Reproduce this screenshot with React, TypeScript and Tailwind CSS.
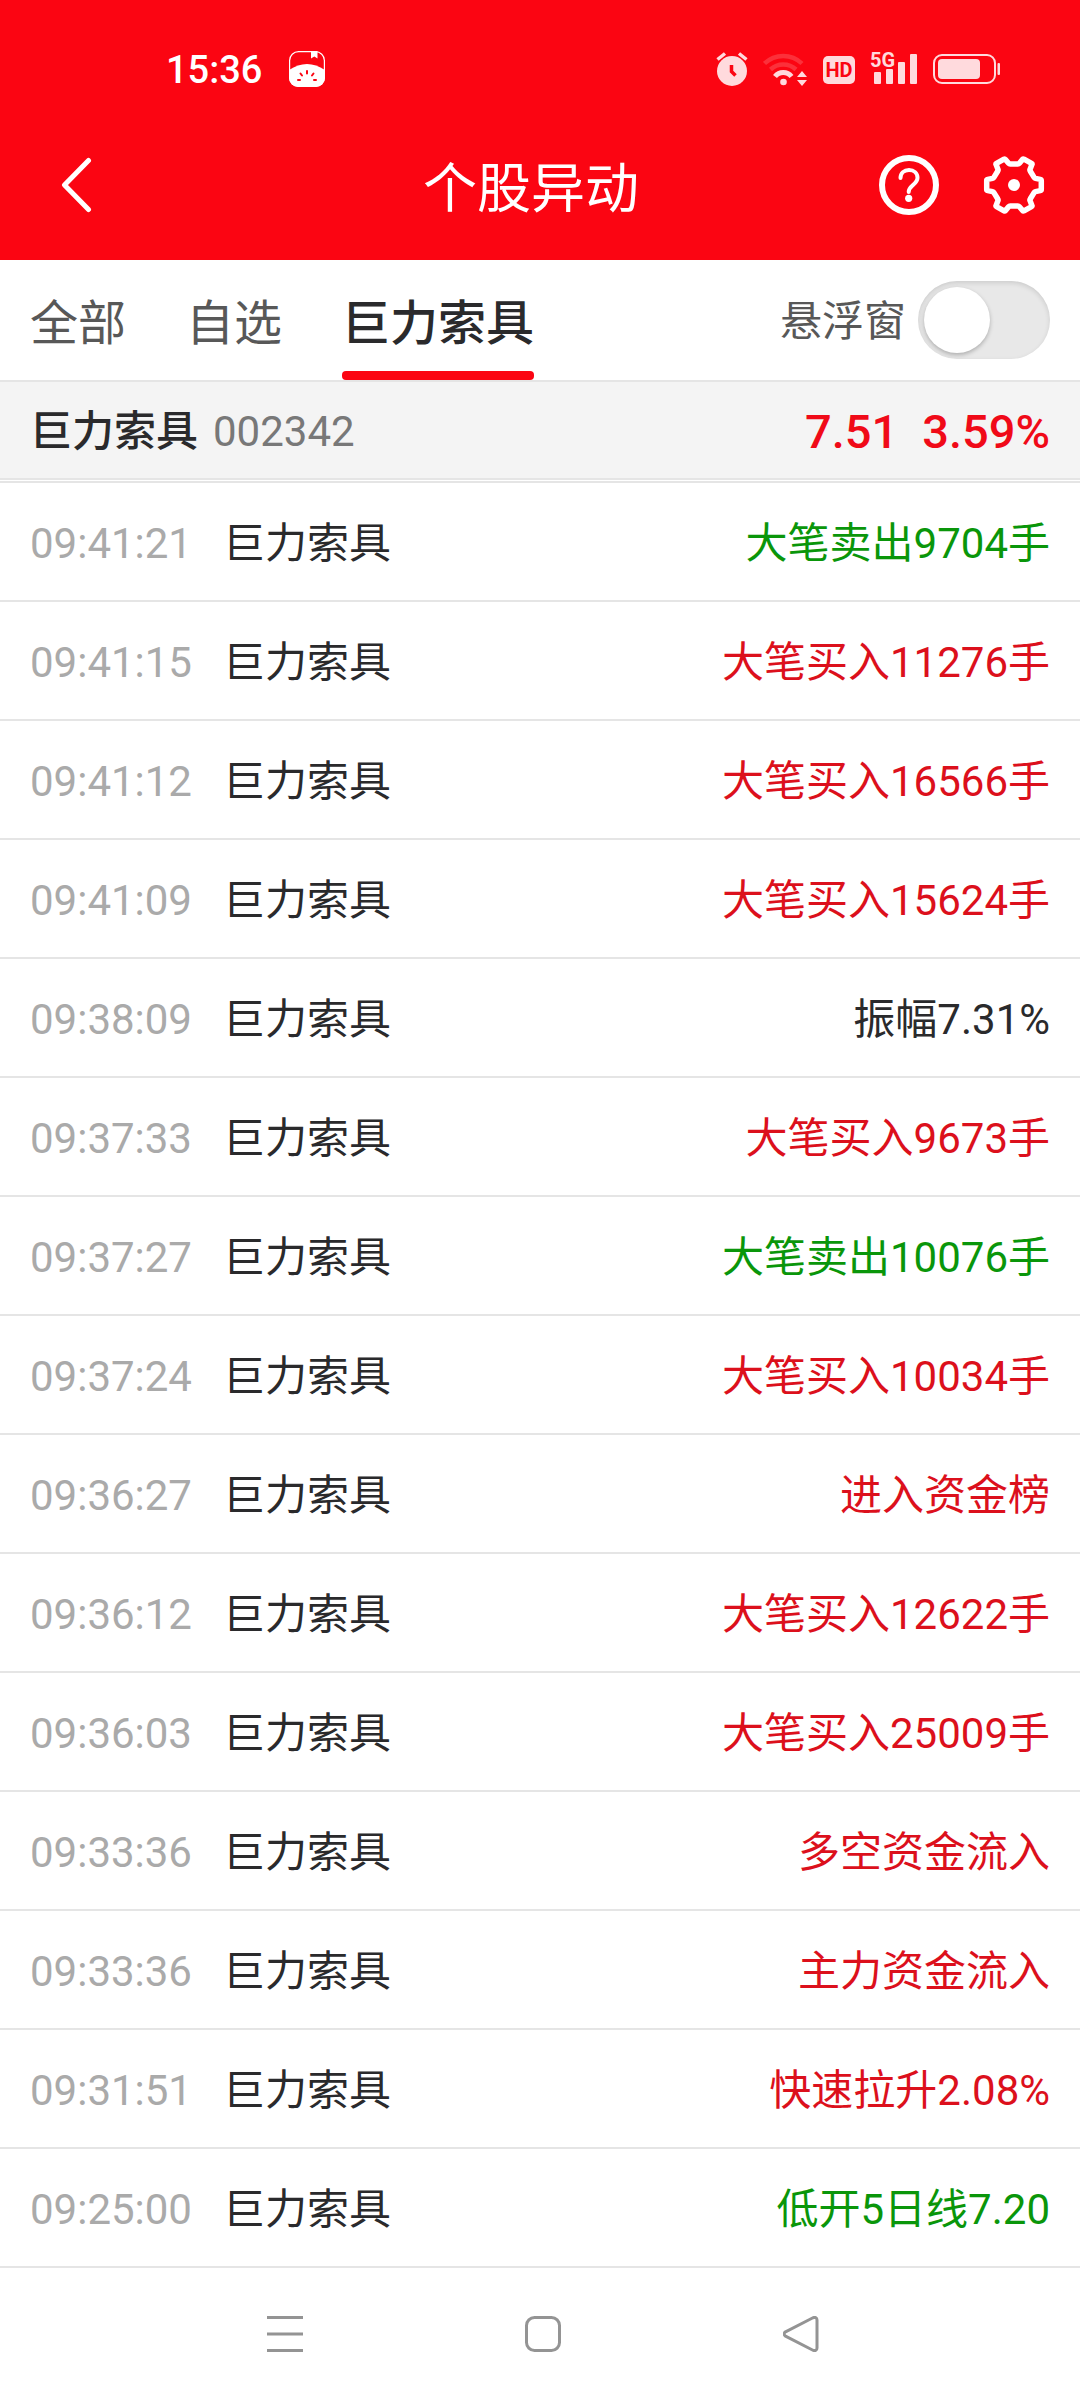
import { useState } from 'react';

type Trend = 'up' | 'down' | 'flat';

interface StockEvent {
    time: string;
    name: string;
    text: string;
    trend: Trend;
}

const STOCK = '巨力索具';

const events: StockEvent[] = [
    { time: '09:41:21', name: STOCK, text: '大笔卖出9704手', trend: 'down' },
    { time: '09:41:15', name: STOCK, text: '大笔买入11276手', trend: 'up' },
    { time: '09:41:12', name: STOCK, text: '大笔买入16566手', trend: 'up' },
    { time: '09:41:09', name: STOCK, text: '大笔买入15624手', trend: 'up' },
    { time: '09:38:09', name: STOCK, text: '振幅7.31%', trend: 'flat' },
    { time: '09:37:33', name: STOCK, text: '大笔买入9673手', trend: 'up' },
    { time: '09:37:27', name: STOCK, text: '大笔卖出10076手', trend: 'down' },
    { time: '09:37:24', name: STOCK, text: '大笔买入10034手', trend: 'up' },
    { time: '09:36:27', name: STOCK, text: '进入资金榜', trend: 'up' },
    { time: '09:36:12', name: STOCK, text: '大笔买入12622手', trend: 'up' },
    { time: '09:36:03', name: STOCK, text: '大笔买入25009手', trend: 'up' },
    { time: '09:33:36', name: STOCK, text: '多空资金流入', trend: 'up' },
    { time: '09:33:36', name: STOCK, text: '主力资金流入', trend: 'up' },
    { time: '09:31:51', name: STOCK, text: '快速拉升2.08%', trend: 'up' },
    { time: '09:25:00', name: STOCK, text: '低开5日线7.20', trend: 'down' },
];

const trendColor: Record<Trend, string> = {
    up: 'text-[#dc101c]',
    down: 'text-[#0a960a]',
    flat: 'text-[#2a2a2c]',
};

const tabs = ['全部', '自选', STOCK];

function StatusBar() {
    return (
        <div className="flex h-[110px] items-center justify-between pt-7 pr-20 pl-[166px] text-[#ffdadd]">
            <div className="flex items-center gap-[27px]">
                <span className="pt-0.5 text-[38px] leading-none font-medium text-white">15:36</span>
                <svg className="size-9" viewBox="0 0 36 36" fill="none">
                    <rect x="0.6" y="0.6" width="34.8" height="34.8" rx="9" stroke="#fff" strokeWidth="1.2" />
                    <path d="M0 19C6 15 12 13 18 13s12 2 18 6v8a9 9 0 0 1-9 9H9a9 9 0 0 1-9-9z" fill="#fff" />
                    <path d="M22 0h6.500v7.500l-3.200-2-3.300 2z" fill="#fff" />
                    <path
                        d="M18 20v2.500M11.500 22.500l1.500 2M24.500 22.500l-1.500 2M9 29h2M25 29h2"
                        stroke="#fb0512"
                        strokeWidth="2"
                        strokeLinecap="round"
                    />
                </svg>
            </div>
            <div className="flex items-center gap-[15px]">
                {/* 闹钟 */}
                <svg className="h-9 w-8" viewBox="0 0 32 36" fill="none">
                    <circle cx="16" cy="20" r="15" fill="currentColor" />
                    <path d="M1.500 8.500L9 2.500M30.500 8.500L23 2.500" stroke="currentColor" strokeWidth="3.500" />
                    <path d="M15.500 14v6.500l4 4" stroke="#fb0512" strokeWidth="3.500" />
                </svg>
                {/* WiFi */}
                <svg className="h-9 w-[45px]" viewBox="0 0 45 36" fill="none">
                    <g stroke="currentColor" strokeWidth="4.500">
                        <path d="M1.500 12.500a27 27 0 0 1 37.500 0" opacity="0.2" />
                        <path d="M7.500 18.500a18.500 18.500 0 0 1 25.500 0" opacity="0.2" />
                        <path d="M12 25.500a10.500 10.500 0 0 1 16.500 0" strokeWidth="5" />
                    </g>
                    <circle cx="20.500" cy="31" r="3.300" fill="currentColor" />
                    <path d="M34 26l5-6 5 6zM34 29l5 6 5-6z" fill="currentColor" />
                </svg>
                {/* HD */}
                <svg className="h-9 w-8" viewBox="0 0 32 36">
                    <rect y="5" width="32" height="28" rx="5" fill="currentColor" />
                    <text
                        x="16"
                        y="26"
                        textAnchor="middle"
                        fill="#fb0512"
                        className="font-['Liberation_Sans_Narrow',Roboto,sans-serif] text-[20px] font-bold"
                    >
                        HD
                    </text>
                </svg>
                {/* 5G 信号 */}
                <svg className="h-9 w-12 overflow-visible" viewBox="0 0 48 36" fill="currentColor">
                    <text
                        x="0"
                        y="16"
                        className="font-['Liberation_Sans_Narrow',Roboto,sans-serif] text-[20px] font-bold"
                    >
                        5G
                    </text>
                    <rect x="4" y="21" width="7" height="12" rx="1" />
                    <rect x="16" y="18" width="7" height="15" rx="1" />
                    <rect x="28" y="11" width="7" height="22" rx="1" />
                    <rect x="40" y="3" width="7" height="30" rx="1" />
                </svg>
                {/* 电池 */}
                <svg className="h-9 w-[67px]" viewBox="0 0 67 36" fill="none">
                    <rect x="1" y="4" width="61" height="28" rx="8" stroke="currentColor" strokeWidth="2" />
                    <rect x="5" y="8" width="42" height="20" rx="4" fill="currentColor" />
                    <rect x="64.500" y="12" width="2.500" height="12" rx="1" fill="currentColor" />
                </svg>
            </div>
        </div>
    );
}

function TitleBar() {
    return (
        <div className="grid h-[150px] grid-cols-[1fr_auto_1fr] items-center pr-[18px]">
            <button type="button" aria-label="返回" className="justify-self-start pl-[60px]">
                <svg className="h-[60px] w-8" viewBox="0 0 32 60" fill="none">
                    <path
                        d="M28.500 5.500L4.500 30l24 24.500"
                        stroke="currentColor"
                        strokeWidth="5"
                        strokeLinecap="round"
                        strokeLinejoin="round"
                    />
                </svg>
            </button>
            <h1 className="pt-2.5 text-[54px] leading-none">个股异动</h1>
            <div className="flex gap-[45px] justify-self-end pr-[18px]">
                <button type="button" aria-label="帮助">
                    <svg className="size-[60px]" viewBox="0 0 60 60" fill="none">
                        <circle cx="30" cy="30" r="27" stroke="currentColor" strokeWidth="6" />
                        <path
                            d="M21.500 23c0-4.800 3.600-8 8.500-8s8.500 3.200 8.500 7.800c0 3-1.700 4.800-4.200 7-2.700 2.400-4.600 3.800-4.600 7.200"
                            stroke="currentColor"
                            strokeWidth="4"
                            strokeLinecap="round"
                        />
                        <circle cx="29.700" cy="43.300" r="3.600" fill="currentColor" />
                    </svg>
                </button>
                <button type="button" aria-label="设置">
                    <svg className="size-[60px] overflow-visible" viewBox="0 0 60 60" fill="none">
                        <path
                            d="M57.300 25.500Q57.300 24.600 56.300 24.400L51.500 23.400Q50.600 23.200 50.100 22.400L46.200 16Q45.700 15.300 46 14.400L47.900 9.600Q48.300 8.800 47.500 8.300L40 4.100Q39.200 3.700 38.600 4.400L35.400 8.300Q34.800 9 33.800 9H26.200Q25.200 9 24.600 8.300L21.400 4.400Q20.800 3.700 20 4.100L12.500 8.300Q11.700 8.800 12.100 9.600L14 14.400Q14.300 15.300 13.800 16L9.900 22.400Q9.400 23.200 8.500 23.400L3.700 24.400Q2.700 24.600 2.700 25.500V34.500Q2.700 35.400 3.700 35.600L8.500 36.600Q9.400 36.800 9.900 37.600L13.800 44Q14.300 44.700 14 45.600L12.100 50.400Q11.700 51.200 12.500 51.700L20 55.900Q20.800 56.300 21.400 55.600L24.600 51.700Q25.200 51 26.200 51H33.800Q34.800 51 35.400 51.700L38.600 55.600Q39.200 56.300 40 55.900L47.500 51.700Q48.300 51.200 47.900 50.400L46 45.600Q45.700 44.700 46.200 44L50.100 37.600Q50.600 36.800 51.500 36.600L56.300 35.600Q57.300 35.400 57.300 34.500Z"
                            stroke="currentColor"
                            strokeWidth="5.500"
                            strokeLinejoin="round"
                        />
                        <circle cx="30" cy="30" r="6" fill="currentColor" />
                    </svg>
                </button>
            </div>
        </div>
    );
}

export default function App() {
    const [activeTab, setActiveTab] = useState(STOCK);
    const [floating, setFloating] = useState(false);

    return (
        <div className="flex min-h-screen flex-col bg-white font-[Roboto,'Noto_Sans_CJK_SC',sans-serif] text-[42px] leading-[60px] text-[#2a2a2c]">
            <header className="bg-[#fb0512] text-white">
                <StatusBar />
                <TitleBar />
            </header>

            {/* 标签栏 */}
            <div className="flex h-[122px] items-center justify-between border-b-2 border-[#e5e5e5] px-[30px]">
                <nav className="flex h-full gap-[60px] text-[48px]">
                    {tabs.map((tab) => (
                        <button
                            key={tab}
                            type="button"
                            onClick={() => setActiveTab(tab)}
                            className={`flex h-full flex-col justify-between pt-[34px] ${
                                tab === activeTab ? 'font-medium' : 'text-[#585858]'
                            }`}
                        >
                            {tab}
                            {tab === activeTab && <span className="h-[9px] w-full rounded bg-[#fb0512]" />}
                        </button>
                    ))}
                </nav>
                <label className="flex items-center gap-3 text-[#585858]">
                    <span className="pt-1">悬浮窗</span>
                    <input
                        type="checkbox"
                        checked={floating}
                        onChange={(e) => setFloating(e.target.checked)}
                        className="h-[78px] w-[132px] appearance-none rounded-full bg-[#e8e8e8] p-1.5 shadow-[inset_0_2px_5px_rgba(0,0,0,0.12)] before:block before:size-[66px] before:rounded-full before:bg-white before:shadow-[0_2px_4px_rgba(0,0,0,0.25)] checked:bg-[#fb0512] checked:before:ml-[54px]"
                    />
                </label>
            </div>

            {/* 当前股票 */}
            <div className="flex h-[98px] items-center justify-between border-b-2 border-[#e5e5e5] bg-[#f4f4f4] px-[30px] pt-1">
                <div className="flex gap-[15px]">
                    <span className="font-medium">{STOCK}</span>
                    <span className="text-[#787878]">002342</span>
                </div>
                <div className="flex gap-6 text-[47px] font-medium text-[#f00a18]">
                    <span>7.51</span>
                    <span>3.59%</span>
                </div>
            </div>

            {/* 异动列表 */}
            <main className="mt-px grow border-t-2 border-[#e5e5e5]">
                <table className="w-full border-separate border-spacing-0">
                    <tbody>
                        {events.map((item, index) => (
                            <tr key={index}>
                                <td className="h-[119px] w-[223px] border-b-2 border-[#e5e5e5] pt-1 pl-[30px] text-[#aaaaaa]">
                                    {item.time}
                                </td>
                                <td className="border-b-2 border-[#e5e5e5] pt-1">{item.name}</td>
                                <td
                                    className={`border-b-2 border-[#e5e5e5] pt-1 pr-[30px] text-right ${trendColor[item.trend]}`}
                                >
                                    {item.text}
                                </td>
                            </tr>
                        ))}
                    </tbody>
                </table>
            </main>

            {/* 系统导航键 */}
            <footer className="flex h-[132px] items-center justify-center pl-1.5 text-[#949494]">
                <button type="button" aria-label="最近任务" className="flex w-[258px] justify-center">
                    <svg className="size-9" viewBox="0 0 36 36" stroke="currentColor" strokeWidth="3">
                        <path d="M0 1.500h36M0 18h36M0 34.500h36" />
                    </svg>
                </button>
                <button type="button" aria-label="主屏幕" className="flex w-[258px] justify-center">
                    <svg className="size-9" viewBox="0 0 36 36" fill="none" stroke="currentColor" strokeWidth="3">
                        <rect x="1.500" y="1.500" width="33" height="33" rx="8" />
                    </svg>
                </button>
                <button type="button" aria-label="返回上一级" className="flex w-[258px] justify-center">
                    <svg
                        className="size-9"
                        viewBox="0 0 36 36"
                        fill="none"
                        stroke="currentColor"
                        strokeWidth="3"
                        strokeLinejoin="round"
                    >
                        <path d="M2.500 15.800L29.500 2c2.500-1.300 4.500-.3 4.500 2v28c0 2.300-2 3.300-4.500 2L2.500 20.200c-1.800-1.200-1.800-3.200 0-4.400z" />
                    </svg>
                </button>
            </footer>
        </div>
    );
}
